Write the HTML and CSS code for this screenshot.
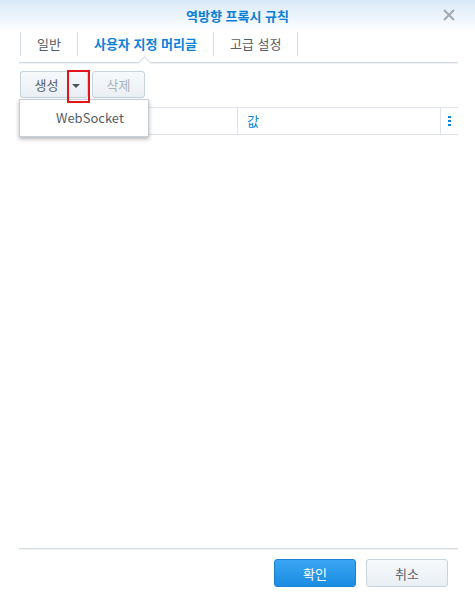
FILE: index.html
```html
<!DOCTYPE html>
<html lang="ko">

<head>
    <meta charset="UTF-8">
    <meta name="viewport" content="width=device-width, initial-scale=1.0">
    <title>역방향 프록시 규칙</title>
    <link rel="stylesheet" href="styles.css">
</head>

<body>
    <div class="dialog">
        <div class="header">
            <span></span>
            <h1>역방향 프록시 규칙</h1>
            <button class="close" title="닫기">
                <svg width="12" height="12" viewBox="0 0 12 12">
                    <path d="M1 1 L11 11 M11 1 L1 11" stroke="#a3a9b0" stroke-width="2" fill="none"/>
                </svg>
            </button>
        </div>

        <div class="tabs">
            <div class="tab">일반</div>
            <div class="tab active">사용자 지정 머리글</div>
            <div class="tab">고급 설정</div>
        </div>

        <div class="content">
            <div class="toolbar">
                <div class="split">
                    <button class="btn create">생성</button>
                    <button class="btn arrow"><span class="caret"></span></button>
                </div>
                <button class="btn delete" disabled>삭제</button>

                <div class="menu">
                    <div class="menu-item">WebSocket</div>
                </div>
            </div>

            <div class="grid-head">
                <div class="col">이름</div>
                <div class="col value">값</div>
                <div class="col more">
                    <svg width="4" height="10" viewBox="0 0 4 10">
                        <rect x="0" y="0" width="3" height="2" fill="#0a86e0"/>
                        <rect x="0" y="4" width="3" height="2" fill="#0a86e0"/>
                        <rect x="0" y="8" width="3" height="2" fill="#0a86e0"/>
                    </svg>
                </div>
            </div>
        </div>

        <div class="footer">
            <button class="btn primary">확인</button>
            <button class="btn">취소</button>
        </div>
    </div>
</body>

</html>
```

FILE: styles.css
```css
* {
    box-sizing: border-box;
}

body {
    margin: 0;
    font-family: "Noto Sans CJK KR", "Noto Sans", sans-serif;
    font-size: 13px;
    color: #505a64;
    background: #fff;
}

.dialog {
    height: 100vh;
    display: flex;
    flex-direction: column;
    background: linear-gradient(#d9e9f8 0px, #ffffff 32px);
}

.header {
    height: 30px;
    display: grid;
    grid-template-columns: 40px 1fr 40px;
    align-items: center;
}

.header h1 {
    margin: 0;
    text-align: center;
    font-size: 13px;
    font-weight: bold;
    color: #0a7fd6;
}

.close {
    border: none;
    background: none;
    padding: 0;
    width: 14px;
    height: 14px;
    margin-left: 7px;
    display: flex;
    align-items: center;
    justify-content: center;
}

.tabs {
    position: relative;
    display: flex;
    margin: 2px 17px 0 19px;
    padding: 0 0 6px 1px;
    border-bottom: 1px solid #d6dce2;
    box-shadow: 0 1px 0 #eef1f4;
}

.tab {
    height: 24px;
    line-height: 23px;
    padding: 0 16px;
    border-left: 1px solid #d8dfe6;
    color: #555d66;
}

.tab:last-child {
    border-right: 1px solid #d8dfe6;
}

.tab.active {
    position: relative;
    color: #0a82dc;
    font-weight: bold;
    width: 136px;
    text-align: center;
    padding: 0;
}

.tab.active::after {
    content: "";
    position: absolute;
    left: 62px;
    bottom: -11px;
    width: 8px;
    height: 8px;
    background: #fff;
    border-top: 1px solid #d6dce2;
    border-left: 1px solid #d6dce2;
    transform: rotate(45deg);
}

.content {
    flex: 1;
    margin: 0 17px 0 19px;
    border-bottom: 1px solid #d6dce2;
    box-shadow: 0 1px 0 #eef1f4;
}

.toolbar {
    position: relative;
    display: flex;
    gap: 4px;
    margin-top: 8px;
    padding-left: 1px;
}

.btn {
    height: 27px;
    padding: 0 14px;
    font-family: inherit;
    font-size: 13px;
    color: #5a626b;
    background: linear-gradient(#f7f9fb, #eaeff4);
    border: 1px solid #c9d3dc;
    border-radius: 3px;
}

.btn:disabled {
    color: #aab2ba;
}

.split {
    display: flex;
}

.split .create {
    width: 47px;
    border-right: none;
    border-radius: 3px 0 0 3px;
    padding: 0 0 0 5px;
}

.split .arrow {
    position: relative;
    width: 21px;
    padding: 0;
    border-left: none;
    border-radius: 0 3px 3px 0;
}

.split .arrow::after {
    content: "";
    position: absolute;
    left: 0;
    top: -2px;
    width: 19px;
    height: 29px;
    border: 2px solid #e3141c;
    z-index: 3;
}

.caret {
    display: inline-block;
    border-left: 4px solid transparent;
    border-right: 4px solid transparent;
    border-top: 4px solid #4a525a;
    vertical-align: middle;
    margin-right: 3px;
}

.btn.delete {
    width: 53px;
    padding: 0;
}

.menu {
    position: absolute;
    left: 0;
    top: 28px;
    width: 130px;
    height: 38px;
    background: #fff;
    border: 1px solid #c8cfd6;
    box-shadow: 0 2px 4px rgba(0, 0, 0, 0.3);
    z-index: 2;
}

.menu-item {
    line-height: 36px;
    padding-left: 36px;
    color: #555d66;
}

.grid-head {
    display: flex;
    margin-top: 9px;
    height: 28px;
    border-top: 1px solid #dde3e9;
    border-bottom: 1px solid #dde3e9;
}

.col {
    line-height: 26px;
    padding-left: 9px;
    color: #0a82dc;
}

.col:first-child {
    width: 219px;
    border-right: 1px solid #dde3e9;
}

.col.value {
    width: 203px;
    border-right: 1px solid #dde3e9;
}

.col.more {
    padding-left: 7px;
    display: flex;
    align-items: center;
}

.footer {
    height: 46px;
    display: flex;
    justify-content: flex-end;
    gap: 10px;
    padding: 10px 27px 0 0;
}

.footer .btn {
    width: 82px;
    height: 28px;
}

.btn.primary {
    color: #fff;
    background: linear-gradient(#3aa5f2, #1a8ce2);
    border-color: #1b82d4;
}
```
